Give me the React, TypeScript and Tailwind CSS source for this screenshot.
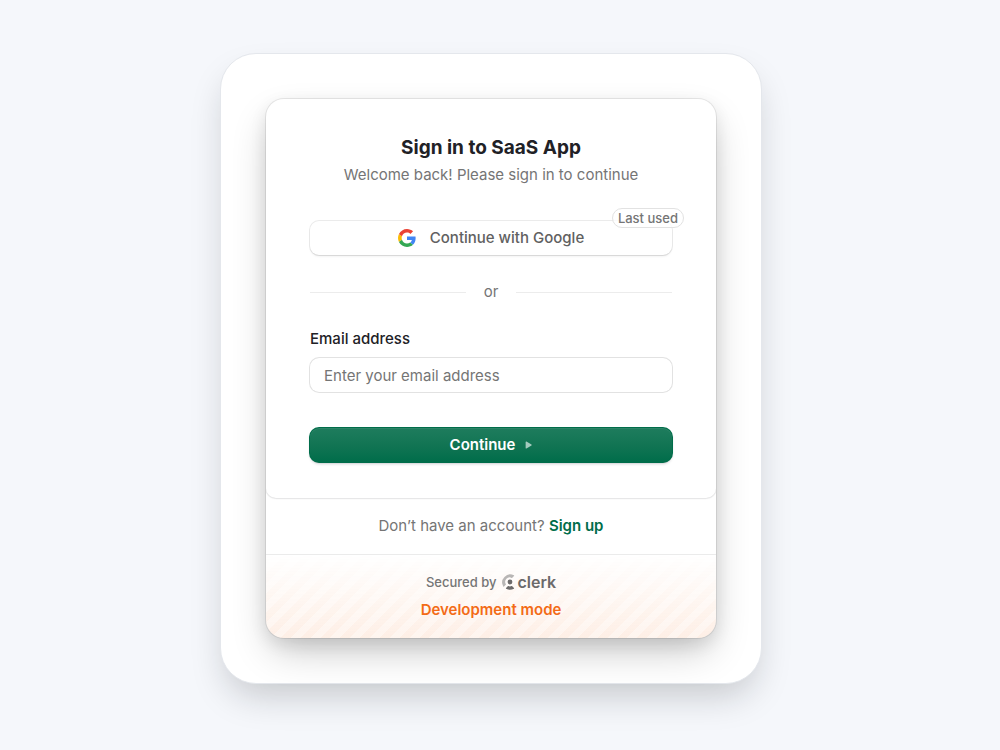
import React from 'react';

function GoogleIcon() {
  return (
    <svg viewBox="0 0 48 48" className="size-[18px]" aria-hidden="true">
      <path fill="#4285F4" d="M47 24.55c0-1.57-.15-3.09-.38-4.55H24v9.02h12.94c-.58 2.96-2.26 5.48-4.78 7.18l7.73 6C44.4 38.02 47 31.84 47 24.55z" />
      <path fill="#FBBC05" d="M10.53 28.59A14.5 14.5 0 0 1 9.77 24c0-1.6.27-3.14.76-4.59l-7.98-6.19A23.94 23.94 0 0 0 0 24c0 3.87.92 7.53 2.56 10.78z" />
      <path fill="#34A853" d="M24 48c6.48 0 11.93-2.13 15.89-5.81l-7.73-6c-2.15 1.45-4.92 2.3-8.16 2.3-6.26 0-11.57-4.22-13.47-9.91l-7.98 6.19C6.51 42.62 14.62 48 24 48z" />
      <path fill="#EA4335" d="M24 9.5c3.54 0 6.71 1.22 9.21 3.6l6.85-6.85C35.9 2.38 30.47 0 24 0 14.62 0 6.51 5.38 2.56 13.22l7.98 6.19C12.43 13.72 17.74 9.5 24 9.5z" />
    </svg>
  );
}

function ClerkMark() {
  return (
    <svg viewBox="0 0 13 16" className="h-4 w-[13px]" aria-hidden="true">
      <path
        fill="#b8b6b5"
        d="M11.9 1.35a.5.5 0 0 1 .08.76l-1.7 1.7a.56.56 0 0 1-.68.08A4.45 4.45 0 0 0 3.8 10.1a.56.56 0 0 1-.08.68l-1.7 1.7a.5.5 0 0 1-.76-.08A8 8 0 0 1 11.9 1.35z"
      />
      <circle cx="8" cy="8" r="2.4" fill="#6c6a6a" />
      <path
        fill="#6c6a6a"
        d="M11.98 13.88a.5.5 0 0 1-.08.76 7.9 7.9 0 0 1-7.8 0 .5.5 0 0 1-.08-.76l1.74-1.72a.56.56 0 0 1 .67-.08 4.45 4.45 0 0 0 3.14 0 .56.56 0 0 1 .67.08z"
      />
    </svg>
  );
}

export default function App() {
  return (
    <main className="flex min-h-screen items-start justify-center bg-[#f5f7fb] py-[53px] pr-[18px] font-['Inter',sans-serif] text-[15px] leading-5 text-[#757575]">
      <div className="w-full max-w-[542px] rounded-[36px] border border-[#e4e7ec] bg-white p-[45px] shadow-[0_18px_36px_-8px_rgba(20,22,28,0.22)]">
        <div className="overflow-hidden rounded-[18px] bg-white shadow-[0_0_0_1px_rgba(0,0,0,0.08),0_17px_39px_-6px_rgba(0,0,0,0.24),0_6px_17px_rgba(0,0,0,0.09)]">
          <section className="flex flex-col gap-9 rounded-b-[10px] px-11 py-9 shadow-[0_0_2px_rgba(0,0,0,0.08),0_0_0_1px_rgba(0,0,0,0.04),0_1px_2px_rgba(25,28,33,0.05)]">
            <header className="flex flex-col gap-1 text-center">
              <h1 className="text-[19px] font-bold leading-[26px] text-[#212126]">Sign in to SaaS App</h1>
              <p>Welcome back! Please sign in to continue</p>
            </header>

            <form className="flex flex-col" onSubmit={(event) => event.preventDefault()}>
              <button
                type="button"
                className="relative flex h-[34px] items-center justify-center gap-[14px] rounded-[9px] bg-white font-medium text-[#616161] shadow-[0_0_0_1px_rgba(0,0,0,0.08),0_2px_3px_-1px_rgba(0,0,0,0.09),0_1px_0_rgba(0,0,0,0.02)]"
              >
                <GoogleIcon />
                Continue with Google
                <span className="absolute -right-3 -top-[13px] rounded-full border border-[#e2e2e2] bg-white/80 px-[5px] text-[13px] font-medium leading-[18px] text-[#757575]">
                  Last used
                </span>
              </button>

              <div className="my-[27px] flex items-center gap-[18px]">
                <span className="h-px flex-1 bg-[#ececec]" />
                or
                <span className="h-px flex-1 bg-[#ececec]" />
              </div>

              <label htmlFor="email" className="mb-[9px] font-medium text-[#212126]">
                Email address
              </label>
              <input
                id="email"
                type="email"
                placeholder="Enter your email address"
                className="h-[34px] w-full rounded-[9px] bg-white px-[14px] text-[#212126] shadow-[0_0_0_1px_rgba(0,0,0,0.11),0_0_1px_rgba(0,0,0,0.06)] outline-none placeholder:text-[#757575]"
              />

              <button
                type="submit"
                className="mt-9 flex h-[34px] items-center justify-center gap-[10px] rounded-[9px] bg-[#006d4a] bg-linear-to-b from-[#1e7c5d] to-[#006d4a] font-semibold text-white shadow-[0_0_0_1px_#006d4a,inset_0_1px_1px_rgba(255,255,255,0.07),0_2px_3px_rgba(34,42,53,0.2),0_1px_1px_rgba(0,0,0,0.24)]"
              >
                Continue
                <svg viewBox="0 0 6 7" className="h-2 w-[7px]" aria-hidden="true">
                  <path d="M.5.9v5.2c0 .4.4.6.7.4l4.4-2.6c.3-.2.3-.6 0-.8L1.2.5C.9.3.5.5.5.9z" fill="white" fillOpacity="0.62" />
                </svg>
              </button>
            </form>
          </section>

          <footer>
            <p className="py-[18px] text-center">
              Don’t have an account?{' '}
              <a href="#sign-up" className="font-semibold text-[#006d4a]">
                Sign up
              </a>
            </p>
            <div className="relative flex flex-col items-center gap-2 border-t border-[#ebebeb] pb-[18px] pt-[17px]">
              <div className="absolute inset-0 bg-[repeating-linear-gradient(-45deg,rgba(243,107,22,0.07)_0_7px,rgba(243,107,22,0.11)_7px_14px)] mask-linear-180 mask-linear-from-transparent mask-linear-to-black" />
              <div className="relative flex items-center gap-[6px] text-[13px] font-medium">
                Secured by
                <a href="#clerk" className="flex items-center gap-[2px] text-base font-semibold leading-5 text-[#6c6a6a]">
                  <ClerkMark />
                  clerk
                </a>
              </div>
              <p className="relative font-semibold text-[#f36b16]">Development mode</p>
            </div>
          </footer>
        </div>
      </div>
    </main>
  );
}
